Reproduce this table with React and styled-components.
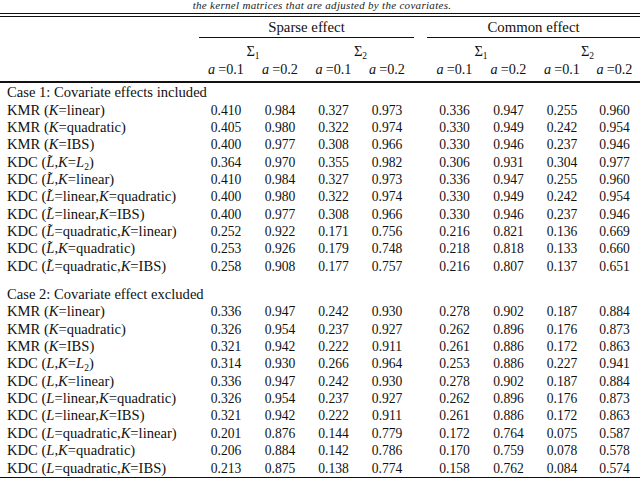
import React from "react";
import styled, { createGlobalStyle } from "styled-components";

const GlobalStyle = createGlobalStyle`
  html, body {
    margin: 0;
    padding: 0;
    background: #ffffff;
  }
`;

const cols = "199px 54px 54px 53px 54px 13px 55px 53px 54px 51px";
const serif = `"Liberation Serif", "DejaVu Serif", "Times New Roman", serif`;

const Page = styled.div`
  width: 640px;
  height: 478px;
  overflow: hidden;
  background: #ffffff;
  color: #111;
  font-family: ${serif};
  font-size: 14.6px;
`;

const Caption = styled.div`
  height: 12px;
  line-height: 10px;
  padding-left: 4px;
  text-align: center;
  font-style: italic;
  font-size: 11px;
  letter-spacing: 0.3px;
  color: #222;
`;

const DoubleRule = styled.div`
  height: 2px;
  margin-top: 1px;
  border-top: 1px solid #111;
  border-bottom: 1px solid #111;
`;

const Row = styled.div`
  display: grid;
  grid-template-columns: ${cols};
  height: ${(p) => p.$h}px;
  line-height: ${(p) => p.$h}px;
  margin-top: ${(p) => p.$mt || 0}px;
  white-space: nowrap;
`;

const GroupHead = styled.div`
  grid-column: ${(p) => p.$col};
  text-align: center;
  height: 21px;
  line-height: 20px;
  font-size: 14.8px;
  box-sizing: border-box;
  border-bottom: 1px solid #111;
`;

const Cell = styled.div`
  grid-column: ${(p) => p.$col || "auto"};
  text-align: center;
  font-size: ${(p) => p.$size || 13.6}px;
`;

const Label = styled.div`
  grid-column: ${(p) => (p.$span ? "1 / -1" : "1")};
  padding-left: 7px;
`;

const Sub = styled.span`
  font-size: 9.5px;
  position: relative;
  top: 3px;
`;

const MathA = styled.i`
  margin-right: 3px;
`;

const Rule = styled.div`
  height: ${(p) => p.$w}px;
  margin-top: ${(p) => p.$mt || 0}px;
  background: #111;
`;

const Block = styled.div`
  margin-top: ${(p) => p.$mt}px;
`;

// L with a combining tilde, kept as one text node
const Lt = () => <i>{"L\u0303"}</i>;

const case1 = [
  [<>KMR (<i>K</i>=linear)</>, "0.410 0.984 0.327 0.973 0.336 0.947 0.255 0.960"],
  [<>KMR (<i>K</i>=quadratic)</>, "0.405 0.980 0.322 0.974 0.330 0.949 0.242 0.954"],
  [<>KMR (<i>K</i>=IBS)</>, "0.400 0.977 0.308 0.966 0.330 0.946 0.237 0.946"],
  [<>KDC (<Lt />,<i>K</i>=<i>L</i><Sub>2</Sub>)</>, "0.364 0.970 0.355 0.982 0.306 0.931 0.304 0.977"],
  [<>KDC (<Lt />,<i>K</i>=linear)</>, "0.410 0.984 0.327 0.973 0.336 0.947 0.255 0.960"],
  [<>KDC (<Lt />=linear,<i>K</i>=quadratic)</>, "0.400 0.980 0.322 0.974 0.330 0.949 0.242 0.954"],
  [<>KDC (<Lt />=linear,<i>K</i>=IBS)</>, "0.400 0.977 0.308 0.966 0.330 0.946 0.237 0.946"],
  [<>KDC (<Lt />=quadratic,<i>K</i>=linear)</>, "0.252 0.922 0.171 0.756 0.216 0.821 0.136 0.669"],
  [<>KDC (<Lt />,<i>K</i>=quadratic)</>, "0.253 0.926 0.179 0.748 0.218 0.818 0.133 0.660"],
  [<>KDC (<Lt />=quadratic,<i>K</i>=IBS)</>, "0.258 0.908 0.177 0.757 0.216 0.807 0.137 0.651"],
];

const case2 = [
  [<>KMR (<i>K</i>=linear)</>, "0.336 0.947 0.242 0.930 0.278 0.902 0.187 0.884"],
  [<>KMR (<i>K</i>=quadratic)</>, "0.326 0.954 0.237 0.927 0.262 0.896 0.176 0.873"],
  [<>KMR (<i>K</i>=IBS)</>, "0.321 0.942 0.222 0.911 0.261 0.886 0.172 0.863"],
  [<>KDC (<i>L</i>,<i>K</i>=<i>L</i><Sub>2</Sub>)</>, "0.314 0.930 0.266 0.964 0.253 0.886 0.227 0.941"],
  [<>KDC (<i>L</i>,<i>K</i>=linear)</>, "0.336 0.947 0.242 0.930 0.278 0.902 0.187 0.884"],
  [<>KDC (<i>L</i>=linear,<i>K</i>=quadratic)</>, "0.326 0.954 0.237 0.927 0.262 0.896 0.176 0.873"],
  [<>KDC (<i>L</i>=linear,<i>K</i>=IBS)</>, "0.321 0.942 0.222 0.911 0.261 0.886 0.172 0.863"],
  [<>KDC (<i>L</i>=quadratic,<i>K</i>=linear)</>, "0.201 0.876 0.144 0.779 0.172 0.764 0.075 0.587"],
  [<>KDC (<i>L</i>,<i>K</i>=quadratic)</>, "0.206 0.884 0.142 0.786 0.170 0.759 0.078 0.578"],
  [<>KDC (<i>L</i>=quadratic,<i>K</i>=IBS)</>, "0.213 0.875 0.138 0.774 0.158 0.762 0.084 0.574"],
];

// value columns skip the gap column (6)
const valueCols = [2, 3, 4, 5, 7, 8, 9, 10];
const ROW = 17.35;

const DataRow = ({ label, values }) => (
  <Row $h={ROW}>
    <Label>{label}</Label>
    {values.split(" ").map((v, i) => (
      <Cell key={i} $col={valueCols[i]}>{v}</Cell>
    ))}
  </Row>
);

const Section = ({ title, rows, mt }) => (
  <Block $mt={mt}>
    <Row $h={ROW}>
      <Label $span>{title}</Label>
    </Row>
    {rows.map(([label, values], i) => (
      <DataRow key={i} label={label} values={values} />
    ))}
  </Block>
);

const Sigma = ({ n }) => <>Σ<Sub>{n}</Sub></>;
const A = ({ v }) => <><MathA>a</MathA>=0.{v}</>;

export default function App() {
  return (
    <Page>
      <GlobalStyle />
      <Caption>the kernel matrices that are adjusted by the covariates.</Caption>
      <DoubleRule />
      <Row $h={21}>
        <GroupHead $col="2 / 6">Sparse effect</GroupHead>
        <GroupHead $col="7 / 11">Common effect</GroupHead>
      </Row>
      <Row $h={18} $mt={4}>
        <Cell $col="2 / 4" $size={14.5}><Sigma n={1} /></Cell>
        <Cell $col="4 / 6" $size={14.5}><Sigma n={2} /></Cell>
        <Cell $col="7 / 9" $size={14.5}><Sigma n={1} /></Cell>
        <Cell $col="9 / 11" $size={14.5}><Sigma n={2} /></Cell>
      </Row>
      <Row $h={18}>
        {valueCols.map((c, i) => (
          <Cell key={c} $col={c} $size={14.2}><A v={i % 2 ? 2 : 1} /></Cell>
        ))}
      </Row>
      <Rule $w={2} $mt={3} />
      <Section title="Case 1: Covariate effects included" rows={case1} mt={1.3} />
      <Section title="Case 2: Covariate effect excluded" rows={case2} mt={11} />
      <Rule $w={1.5} $mt={0} />
    </Page>
  );
}
